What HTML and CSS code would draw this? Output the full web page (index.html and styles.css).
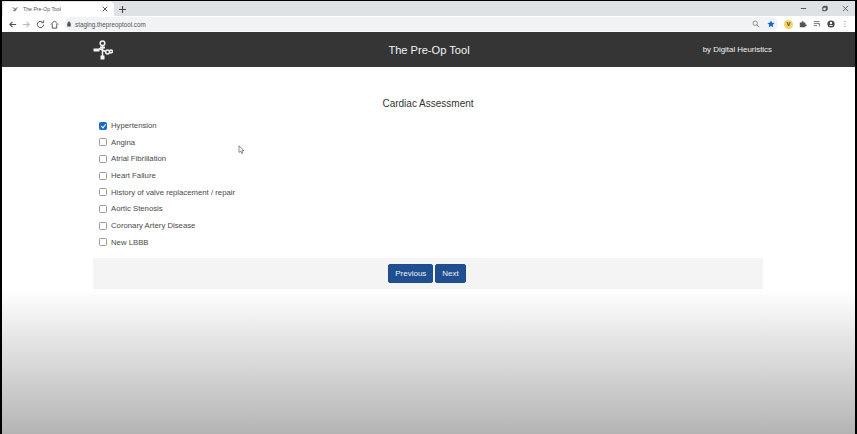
FILE: index.html
```html
<!DOCTYPE html>
<html lang="en">
<head>
    <meta charset="UTF-8">
    <meta name="viewport" content="width=device-width, initial-scale=1.0">
    <title>The Pre-Op Tool</title>
    <link rel="stylesheet" href="styles.css">
</head>
<body>
    <div class="window">
        <div class="tabstrip">
            <div class="tab">
                <svg class="favicon" viewBox="0 0 10 10"><path d="M1 2l3 3M9 2L6 5M5 4v5M2 8l6-3" fill="none" stroke="#555" stroke-width="1.4"/></svg>
                <span class="tab-title">The Pre-Op Tool</span>
                <svg class="tab-close" viewBox="0 0 8 8"><path d="M1 1l6 6M7 1L1 7" stroke="#444" stroke-width="1.2"/></svg>
            </div>
            <svg class="new-tab" viewBox="0 0 8 8"><path d="M4 0v8M0 4h8" stroke="#444" stroke-width="1.3"/></svg>
            <div class="win-controls">
                <svg viewBox="0 0 8 8"><path d="M1 4h6" stroke="#444" stroke-width="1"/></svg>
                <svg viewBox="0 0 8 8"><path d="M2 2.5h4v4H2zM3 2.5V1.500h4v4H6" fill="none" stroke="#333" stroke-width="1"/></svg>
                <svg viewBox="0 0 8 8"><path d="M1 1l6 6M7 1L1 7" stroke="#555" stroke-width="1"/></svg>
            </div>
        </div>
        <div class="toolbar">
            <svg class="tool" viewBox="0 0 10 10"><path d="M9 5H2M5 2L2 5l3 3" fill="none" stroke="#555" stroke-width="1.2"/></svg>
            <svg class="tool" viewBox="0 0 10 10"><path d="M1 5h7M5 2l3 3-3 3" fill="none" stroke="#bbb" stroke-width="1.2"/></svg>
            <svg class="tool" viewBox="0 0 10 10"><path d="M8.500 5A3.500 3.500 0 1 1 7.500 2.500M8.500 0.500v2.500H6" fill="none" stroke="#555" stroke-width="1.1"/></svg>
            <svg class="tool" viewBox="0 0 10 10"><path d="M1 5l4-4 4 4M2.500 4.500V9h5V4.500" fill="none" stroke="#555" stroke-width="1.1"/></svg>
            <div class="address">
                <svg class="lock" viewBox="0 0 6 8"><path d="M0.500 3.500h5V7.500h-5zM1.500 3.500V2a1.500 1.500 0 0 1 3 0v1.500" fill="#555" stroke="#555" stroke-width="0.7"/></svg>
                <span>staging.thepreoptool.com</span>
                <svg class="addr-icon zoom-icon" viewBox="0 0 10 10"><circle cx="4" cy="4" r="2.800" fill="none" stroke="#777" stroke-width="1"/><path d="M6 6l3 3" stroke="#777" stroke-width="1.200"/></svg>
                <svg class="addr-icon" viewBox="0 0 10 10"><path d="M5 0.500l1.400 2.900 3.100 0.400-2.300 2.200 0.600 3.200L5 7.600 2.200 9.200l0.600-3.200L0.500 3.800l3.100-0.400z" fill="#1a67d2"/></svg>
            </div>
            <div class="extensions">
                <span class="ext-badge">V</span>
                <svg viewBox="0 0 10 10"><path d="M1 3h2.500V1.500h2V3H8v2.500h1.500v2H8V9H1z" fill="#555"/></svg>
                <svg viewBox="0 0 10 10"><path d="M1 2h7M1 4.500h7M1 7h4M8 4.500V8" fill="none" stroke="#555" stroke-width="1"/></svg>
                <svg viewBox="0 0 10 10"><circle cx="5" cy="5" r="4.500" fill="#444"/><circle cx="5" cy="3.800" r="1.500" fill="#fff"/><path d="M2.300 7.500a3 2 0 0 1 5.400 0z" fill="#fff"/></svg>
                <svg viewBox="0 0 10 10"><path d="M5 1.500v1M5 4.500v1M5 7.500v1" stroke="#555" stroke-width="1.100"/></svg>
            </div>
        </div>
        <header class="navbar">
            <svg class="logo" viewBox="0 0 20 20">
                <g fill="none" stroke="#f2f2f2" stroke-width="1.500">
                    <circle cx="9.500" cy="3.200" r="2.300"/>
                    <circle cx="14.500" cy="12" r="1.900"/>
                    <circle cx="18" cy="11.500" r="1.400"/>
                    <path d="M9.500 5.500v11M6 8.500l6.500 3"/>
                </g>
                <path d="M0.500 8.500h6v3h-6zM7.500 15.500h4v4h-4zM7 6.500h5v2H7z" fill="#f2f2f2"/>
            </svg>
            <div class="nav-title">The Pre-Op Tool</div>
            <div class="nav-by">by Digital Heuristics</div>
        </header>
        <main class="content">
            <h1 class="heading">Cardiac Assessment</h1>
            <form class="checks">
                <label class="check"><input type="checkbox" checked><span>Hypertension</span></label>
                <label class="check"><input type="checkbox"><span>Angina</span></label>
                <label class="check"><input type="checkbox"><span>Atrial Fibrillation</span></label>
                <label class="check"><input type="checkbox"><span>Heart Failure</span></label>
                <label class="check"><input type="checkbox"><span>History of valve replacement / repair</span></label>
                <label class="check"><input type="checkbox"><span>Aortic Stenosis</span></label>
                <label class="check"><input type="checkbox"><span>Coronary Artery Disease</span></label>
                <label class="check"><input type="checkbox"><span>New LBBB</span></label>
            </form>
            <div class="actions">
                <button class="btn" type="button">Previous</button>
                <button class="btn" type="button">Next</button>
            </div>
            <svg class="cursor" viewBox="0 0 8 12"><path d="M1 1v8l2-1.700 1.300 3 1.300-0.600L4.400 6.800H7z" fill="#fff" stroke="#555" stroke-width="0.800"/></svg>
        </main>
        <div class="fade"></div>
    </div>
</body>
</html>
```

FILE: styles.css
```css
html, body {
    height: 100%;
}

body {
    margin: 0;
    background: #000;
    font-family: 'Liberation Sans', Arial, sans-serif;
    overflow: hidden;
}

.window {
    display: flex;
    flex-direction: column;
    height: 434px;
    margin: 0 2px;
    padding-top: 1px;
    box-sizing: border-box;
}

.tabstrip {
    display: flex;
    align-items: flex-end;
    height: 15px;
    flex-shrink: 0;
    background: #dee1e6;
}

.tab {
    display: flex;
    align-items: center;
    width: 111px;
    height: 14px;
    margin-left: 1px;
    padding: 0 6px 0 9px;
    box-sizing: border-box;
    background: #fff;
    border-radius: 4px 4px 0 0;
}

.favicon {
    width: 6px;
    height: 6px;
    margin-right: 5px;
}

.tab-title {
    flex: 1;
    font-size: 5.200px;
    color: #555;
}

.tab-close {
    width: 6px;
    height: 6px;
}

.new-tab {
    width: 7px;
    height: 7px;
    margin: 0 0 3px 5px;
}

.win-controls {
    display: flex;
    gap: 14px;
    margin-left: auto;
    margin-right: 6px;
    align-self: center;
}

.win-controls svg {
    width: 7px;
    height: 7px;
}

.toolbar {
    display: flex;
    align-items: center;
    height: 16px;
    flex-shrink: 0;
    padding: 0 6px 0 6px;
    gap: 5px;
    background: #fff;
}

.tool {
    width: 9px;
    height: 9px;
}

.address {
    flex: 1;
    display: flex;
    align-items: center;
    height: 14px;
    padding: 0 3px;
    gap: 3px;
    background: #f1f3f4;
    border-radius: 7px;
    font-size: 6.300px;
    color: #555;
}

.lock {
    width: 4px;
    height: 6px;
    margin-right: 1px;
}

.addr-icon {
    width: 8px;
    height: 8px;
}

.zoom-icon {
    margin-left: auto;
    margin-right: 4px;
}

.extensions {
    display: flex;
    align-items: center;
    gap: 6px;
    margin-left: 1px;
}

.extensions svg {
    width: 8px;
    height: 8px;
}

.ext-badge {
    width: 9px;
    height: 9px;
    border-radius: 50%;
    background: #f3d36b;
    color: #554400;
    font-size: 6px;
    font-weight: bold;
    line-height: 9px;
    text-align: center;
}

.navbar {
    display: grid;
    grid-template-columns: 1fr auto 1fr;
    align-items: center;
    height: 35px;
    flex-shrink: 0;
    padding: 0 83px 0 91px;
    background: #353535;
    box-shadow: 0 1px 2px rgba(0, 0, 0, 0.25);
    color: #f2f2f2;
}

.logo {
    width: 20px;
    height: 20px;
}

.nav-title {
    margin-right: 7px;
    font-size: 11.100px;
    color: #f5f5f5;
}

.nav-by {
    justify-self: end;
    font-size: 7.900px;
}

.content {
    position: relative;
    height: 223px;
    flex-shrink: 0;
    padding: 0 92px 0 91px;
    background: #fff;
}

.heading {
    margin: 0;
    padding: 30px 0 9px;
    font-size: 10px;
    font-weight: normal;
    line-height: 13px;
    text-align: center;
    color: #333;
}

.checks {
    display: flex;
    flex-direction: column;
    gap: 5.700px;
    padding-left: 6px;
    margin-top: 1px;
}

.check {
    display: flex;
    align-items: center;
    height: 11px;
    font-size: 7.750px;
    color: #4a4a4a;
}

.check input {
    appearance: none;
    position: relative;
    width: 8px;
    height: 8px;
    margin: 0 4px 0 0;
    box-sizing: border-box;
    border: 1px solid #999;
    border-radius: 1.500px;
    background: #fff;
}

.check input:checked {
    border-color: #1a67d2;
    background: #1a67d2;
}

.check input:checked::after {
    content: "";
    position: absolute;
    left: 1.500px;
    top: 0;
    width: 2px;
    height: 4px;
    border: solid #fff;
    border-width: 0 1px 1px 0;
    transform: rotate(40deg);
}

.actions {
    display: flex;
    justify-content: center;
    align-items: center;
    gap: 2px;
    height: 30px;
    margin-top: 10px;
    padding: 1px 2px 0 0;
    background: #f3f4f3;
}

.btn {
    height: 19px;
    padding: 0 6px;
    border: 1px solid #1f4d8c;
    border-radius: 2px;
    background: #1f4f90;
    color: #f2f2f2;
    font-family: inherit;
    font-size: 8px;
}

.cursor {
    position: absolute;
    left: 236px;
    top: 78px;
    width: 7px;
    height: 10px;
}

.fade {
    flex: 1;
    background: linear-gradient(#fff, #b4b4b4);
}
```
